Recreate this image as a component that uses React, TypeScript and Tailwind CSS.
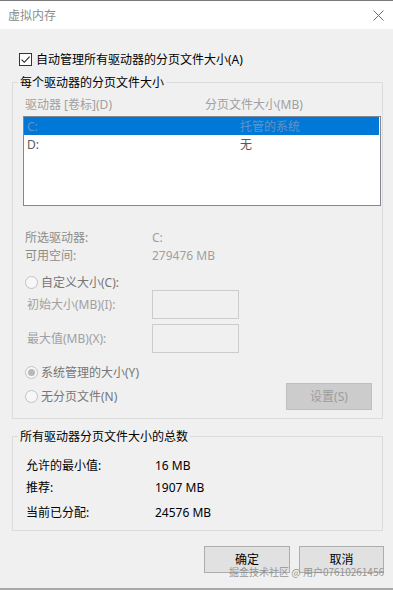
import React from "react";

function Checkbox() {
  return (
    <div className="w-[13px] h-[13px] border border-[#333333] bg-white flex items-center justify-center shrink-0">
      <svg width="11" height="11" viewBox="0 0 11 11">
        <path d="M1.6 5.6 L4.3 8.3 L9.6 2.6" fill="none" stroke="#222222" strokeWidth="1.1" />
      </svg>
    </div>
  );
}

function Radio({ checked }: { checked?: boolean }) {
  return (
    <div className="w-[13px] h-[13px] rounded-full border border-[#c2c2c2] bg-[#f7f7f7] flex items-center justify-center shrink-0">
      {checked && <div className="w-[7px] h-[7px] rounded-full bg-[#b8b8b8]" />}
    </div>
  );
}

export default function App() {
  return (
    <div className="relative w-[393px] h-[590px] bg-[#f0f0f0] flex flex-col overflow-hidden font-['Noto_Sans','Noto_Sans_CJK_SC',sans-serif] text-[12px] leading-[17px] text-black">
      <div className="h-px bg-[#7a7a7a]" />
      <div className="h-[28px] bg-white flex items-center justify-between pl-[8px] pr-[9px]">
        <span className="text-[#8c8c8c]">虚拟内存</span>
        <svg width="11" height="11" viewBox="0 0 11 11">
          <path d="M0.5 0.5 L10.5 10.5 M10.5 0.5 L0.5 10.5" stroke="#6e6e6e" strokeWidth="1" />
        </svg>
      </div>

      <div className="mt-[22px] h-[17px] flex items-center pl-[19px]">
        <Checkbox />
        <span className="ml-[4px]">自动管理所有驱动器的分页文件大小(A)</span>
      </div>

      <fieldset className="mt-[6px] ml-[12px] w-[371px] border border-[#dcdcdc] pb-[8px]">
        <legend className="ml-[5px] px-[2px]">每个驱动器的分页文件大小</legend>
        <div className="mt-[5px] h-[17px] flex items-center pl-[12px] text-[#a0a0a0]">
          <span className="w-[180px]">驱动器 [卷标](D)</span>
          <span>分页文件大小(MB)</span>
        </div>
        <div className="mt-[3px] ml-[10px] w-[358px] h-[90px] border border-[#828790] bg-white pr-px">
          <div className="h-[18px] flex items-center pl-[3px] bg-[#0078d7] text-[#6792c4]">
            <span className="w-[213px]">C:</span>
            <span>托管的系统</span>
          </div>
          <div className="h-[18px] flex items-center pl-[3px] text-[#5a5a5a]">
            <span className="w-[213px]">D:</span>
            <span>无</span>
          </div>
        </div>

        <div className="mt-[22px] pl-[12px]">
          <div className="h-[18px] flex items-center">
            <span className="w-[127px] text-[#8c8c8c]">所选驱动器:</span>
            <span className="text-[#a0a0a0]">C:</span>
          </div>
          <div className="h-[18px] flex items-center">
            <span className="w-[127px] text-[#8c8c8c]">可用空间:</span>
            <span className="text-[#a0a0a0]">279476 MB</span>
          </div>
        </div>

        <div className="mt-[10px] h-[16px] flex items-center pl-[12px]">
          <Radio />
          <span className="ml-[3px] text-[#767676]">自定义大小(C):</span>
        </div>

        <div className="h-[29px] flex items-center pl-[14px]">
          <span className="w-[125px] text-[#a0a0a0]">初始大小(MB)(I):</span>
          <div className="w-[87px] h-[29px] border border-[#cccccc]" />
        </div>
        <div className="mt-[5px] h-[29px] flex items-center pl-[14px]">
          <span className="w-[125px] text-[#a0a0a0]">最大值(MB)(X):</span>
          <div className="w-[87px] h-[29px] border border-[#cccccc]" />
        </div>

        <div className="mt-[11px] h-[16px] flex items-center pl-[12px]">
          <Radio checked />
          <span className="ml-[3px] text-[#767676]">系统管理的大小(Y)</span>
        </div>
        <div className="mt-[3px] h-[27px] flex items-center justify-between pl-[12px] pr-[10px]">
          <div className="flex items-center">
            <Radio />
            <span className="ml-[3px] text-[#767676]">无分页文件(N)</span>
          </div>
          <div className="w-[86px] h-[27px] bg-[#cccccc] border border-[#bfbfbf] flex items-center justify-center text-[#9c9c9c]">
            设置(S)
          </div>
        </div>
      </fieldset>

      <fieldset className="mt-[9px] ml-[12px] w-[371px] border border-[#dcdcdc] pb-[9px]">
        <legend className="ml-[5px] px-[2px]">所有驱动器分页文件大小的总数</legend>
        <div className="mt-[12px] h-[17px] flex items-center pl-[13px]">
          <span className="w-[129px]">允许的最小值:</span>
          <span>16 MB</span>
        </div>
        <div className="mt-[5px] h-[17px] flex items-center pl-[13px]">
          <span className="w-[129px]">推荐:</span>
          <span>1907 MB</span>
        </div>
        <div className="mt-[8px] h-[17px] flex items-center pl-[13px]">
          <span className="w-[129px]">当前已分配:</span>
          <span>24576 MB</span>
        </div>
      </fieldset>

      <div className="mt-[15px] flex justify-end gap-[9px] pr-[9px]">
        <div className="w-[86px] h-[27px] bg-[#e1e1e1] border border-[#adadad] flex items-center justify-center">
          确定
        </div>
        <div className="w-[85px] h-[27px] bg-[#e1e1e1] border border-[#adadad] flex items-center justify-center">
          取消
        </div>
      </div>

      <div className="mt-auto h-[2px] bg-[#a8a8a8]" />

      <div className="absolute left-[229px] top-[565px] font-['Noto_Sans_CJK_SC',sans-serif] text-[10px] leading-[14px] text-[#8a8a8a]/90 whitespace-nowrap">
        掘金技术社区 @ 用户07610261456
      </div>
    </div>
  );
}
